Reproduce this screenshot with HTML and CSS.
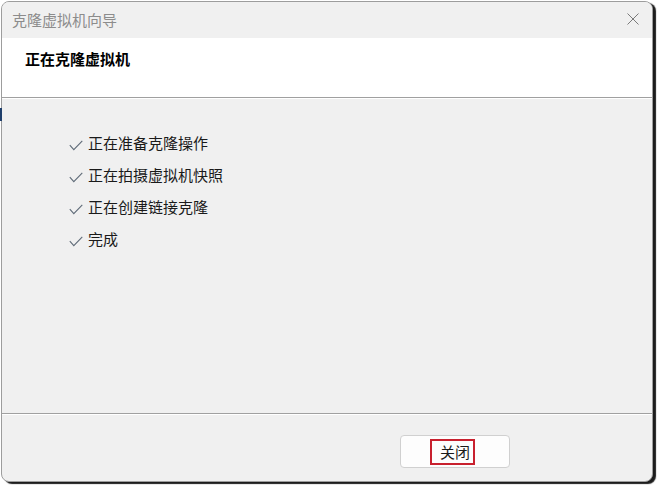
FILE: index.html
```html
<!DOCTYPE html>
<html lang="zh-CN">
<head>
<meta charset="utf-8">
<title>克隆虚拟机向导</title>
<link rel="stylesheet" href="styles.css">
</head>
<body>
<div class="bg-mark"></div>
<div class="window">
  <div class="titlebar">
    <span class="title">克隆虚拟机向导</span>
    <svg class="close" width="12" height="12" viewBox="0 0 12 12"><path d="M0.5 0.5 L11.5 11.5 M11.5 0.5 L0.5 11.5" stroke="#7a7a7a" stroke-width="1" fill="none"/></svg>
  </div>
  <div class="header">
    <div class="header-title">正在克隆虚拟机</div>
  </div>
  <div class="sep"></div>
  <div class="content">
    <ul class="steps">
      <li class="step"><svg class="check" width="14" height="11" viewBox="0 0 14 11"><path d="M0.8 5.2 L4.8 9.6 L13.3 0.8" stroke="#5f6b78" stroke-width="1.1" fill="none"/></svg><span>正在准备克隆操作</span></li>
      <li class="step"><svg class="check" width="14" height="11" viewBox="0 0 14 11"><path d="M0.8 5.2 L4.8 9.6 L13.3 0.8" stroke="#5f6b78" stroke-width="1.1" fill="none"/></svg><span>正在拍摄虚拟机快照</span></li>
      <li class="step"><svg class="check" width="14" height="11" viewBox="0 0 14 11"><path d="M0.8 5.2 L4.8 9.6 L13.3 0.8" stroke="#5f6b78" stroke-width="1.1" fill="none"/></svg><span>正在创建链接克隆</span></li>
      <li class="step"><svg class="check" width="14" height="11" viewBox="0 0 14 11"><path d="M0.8 5.2 L4.8 9.6 L13.3 0.8" stroke="#5f6b78" stroke-width="1.1" fill="none"/></svg><span>完成</span></li>
    </ul>
  </div>
  <div class="sep"></div>
  <div class="footer">
    <button class="btn"><span class="focus">关闭</span></button>
  </div>
</div>
</body>
</html>
```
FILE: styles.css
```css
html, body {
  margin: 0;
  padding: 0;
}
body {
  width: 657px;
  height: 485px;
  overflow: hidden;
  background: #ffffff;
  position: relative;
  font-family: "Noto Sans CJK SC", "Noto Sans", sans-serif;
  font-size: 15px;
  color: #1a1a1a;
}
.bg-mark {
  position: absolute;
  left: 0;
  top: 108px;
  width: 2px;
  height: 13px;
  background: #1f3f6b;
}
.window {
  margin: 1px 0 0 1px;
  width: 652px;
  height: 481px;
  box-sizing: border-box;
  border: 1px solid #9d9d9d;
  border-radius: 8px;
  background: #f0f0f0;
  box-shadow: 3px 2px 1px 0 #1c1c1c;
  display: flex;
  flex-direction: column;
  overflow: hidden;
}
.titlebar {
  height: 36px;
  flex: none;
  display: flex;
  align-items: center;
  justify-content: space-between;
  padding: 0 13px 0 10px;
  background: #f0f0f0;
}
.title {
  color: #8c8c8c;
  line-height: 20px;
}
.close {
  display: block;
  margin-top: -2px;
}
.header {
  height: 59px;
  flex: none;
  background: #ffffff;
  padding: 11px 0 0 23px;
  box-sizing: border-box;
}
.header-title {
  font-weight: bold;
  color: #000;
  line-height: 20px;
}
.sep {
  flex: none;
  height: 1px;
  background: #a0a0a0;
  border-bottom: 1px solid #ffffff;
}
.content {
  flex: 1;
  padding: 34px 0 0 66px;
}
.steps {
  list-style: none;
  margin: 0;
  padding: 0;
  display: flex;
  flex-direction: column;
  gap: 12px;
}
.step {
  display: flex;
  align-items: flex-end;
  line-height: 20px;
  height: 20px;
}
.check {
  display: block;
  margin: 0 5px 2px 1px;
}
.footer {
  height: 66px;
  flex: none;
  display: flex;
  justify-content: flex-end;
  align-items: flex-start;
  padding: 20px 142px 0 0;
  box-sizing: border-box;
}
.btn {
  width: 110px;
  height: 33px;
  box-sizing: border-box;
  border: 1px solid #d0d0d0;
  border-radius: 4px;
  background: #fdfdfd;
  display: flex;
  align-items: center;
  justify-content: center;
  padding: 0;
  font-family: inherit;
  font-size: 15px;
  color: #1a1a1a;
}
.focus {
  display: block;
  border: 2px solid #c8202e;
  line-height: 22px;
  padding: 0 3px 0 8px;
  margin-right: 5px;
}
```
